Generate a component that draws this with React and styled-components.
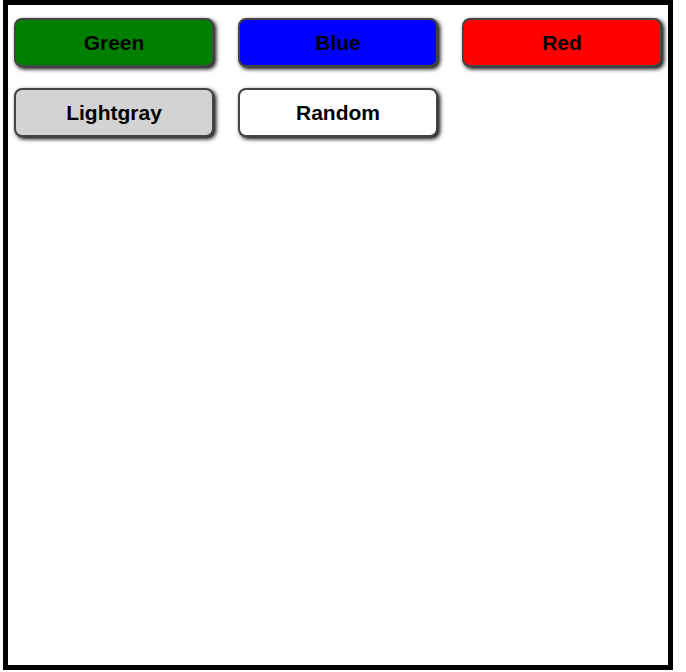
import React from "react";
import styled, { createGlobalStyle } from "styled-components";

const Global = createGlobalStyle`
  html, body { margin: 0; padding: 0; background: #fff; }
  body { font-family: "Liberation Sans", Arial, sans-serif; }
`;

const Frame = styled.div`
  box-sizing: border-box;
  width: 670px;
  height: 670px;
  margin-left: 3px;
  border: 5px solid #000;
  background: #fff;
  padding: 13px 0 0 6px;
`;

const Grid = styled.div`
  display: grid;
  grid-template-columns: repeat(3, 200px);
  column-gap: 24px;
  row-gap: 21px;
`;

const ColorButton = styled.button`
  box-sizing: border-box;
  width: 200px;
  height: 49px;
  border: 2px solid #444;
  border-radius: 8px;
  background: ${(p) => p.$bg};
  color: #000;
  font-family: "Liberation Sans", Arial, sans-serif;
  font-weight: bold;
  font-size: 21px;
  box-shadow: 2px 2px 4px #000;
  cursor: pointer;
  padding: 0;
`;

const buttons = [
  { label: "Green", bg: "#008000" },
  { label: "Blue", bg: "#0000ff" },
  { label: "Red", bg: "#ff0000" },
  { label: "Lightgray", bg: "#d3d3d3" },
  { label: "Random", bg: "#ffffff" },
];

export default function App() {
  return (
    <>
      <Global />
      <Frame>
        <Grid>
          {buttons.map((b) => (
            <ColorButton key={b.label} $bg={b.bg}>
              {b.label}
            </ColorButton>
          ))}
        </Grid>
      </Frame>
    </>
  );
}
